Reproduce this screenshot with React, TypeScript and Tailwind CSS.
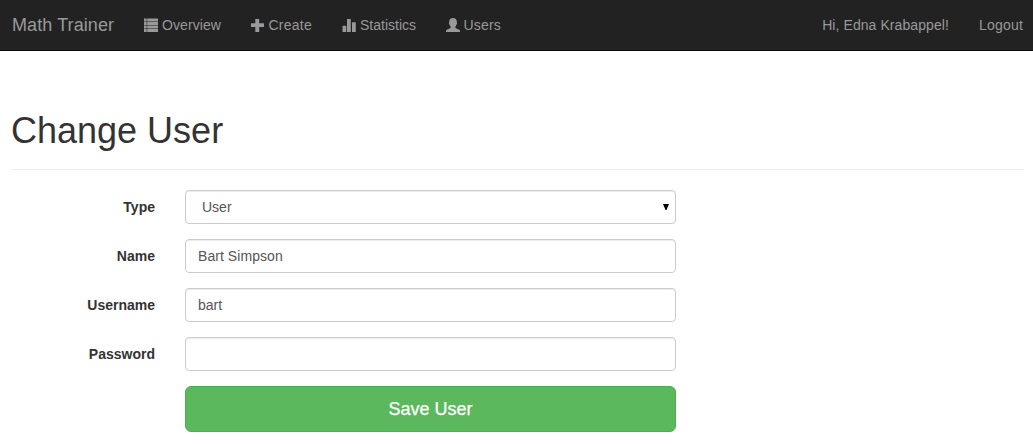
import type { ReactNode } from 'react';

function Glyph({ children }: { children: ReactNode }) {
  return (
    <svg width="15" height="15" viewBox="0 0 15 15" fill="currentColor" className="block shrink-0" aria-hidden="true">
      {children}
    </svg>
  );
}

const links: { label: string; width: string; text: string; icon: ReactNode }[] = [
  {
    label: 'Overview',
    width: 'w-[107px]',
    text: 'ml-[4px] tracking-[0.09px]',
    icon: (
      <path d="M1 .5h2.700v2.900H1zM4.200.5H15v2.900H4.200zM1 4.100h2.700v2.800H1zM4.200 4.100H15v2.800H4.200zM1 7.600h2.700v2.800H1zM4.200 7.600H15v2.800H4.200zM1 11.100h2.700V14H1zM4.200 11.100H15V14H4.200z" />
    ),
  },
  {
    label: 'Create',
    width: 'w-[92px]',
    text: 'ml-[3.5px] tracking-[0.25px]',
    icon: <path d="M5.300 1.300q0-.3.3-.3h3.300q.3 0 .3.300v4h4.500q.3 0 .3.300v3.200q0 .3-.3.300H9.200v4.600q0 .3-.3.300H5.600q-.3 0-.3-.3V9.100H1.300Q1 9.100 1 8.800V5.600q0-.3.3-.3h4z" />,
  },
  {
    label: 'Statistics',
    width: 'w-[103px]',
    text: 'ml-[3px]',
    icon: <path d="M.5 8.300q0-.5.5-.5h2.800q.5 0 .5.500V14H.5zM5 1.500q0-.5.5-.5h2.800q.5 0 .5.500V14H5zM10 4.700q0-.5.5-.5h2.800q.5 0 .5.500V14H10z" />,
  },
  {
    label: 'Users',
    width: 'w-[90px]',
    text: 'ml-[3.5px] tracking-[0.2px]',
    icon: <path d="M1 14v-1.200q0-.7.8-1l3.300-1.500q.6-.3.600-1V8.700q-1-.9-1.200-2.300-.6-.2-.6-1.100 0-.6.3-.8C3.900 1.600 5.300 0 8 0s4.100 1.600 3.800 4.500q.3.200.3.800 0 .9-.6 1.100-.2 1.400-1.200 2.300v.6q0 .7.6 1l3.300 1.500q.8.300.8 1V14z" />,
  },
];

const inputClass =
  'block h-[34px] w-[491px] rounded-[4px] border border-[#ccc] bg-white px-3 text-[14px] leading-5 text-[#555] shadow-[inset_0_1px_1px_rgba(0,0,0,0.075)] outline-none';

function Field({ label, id, children }: { label: string; id: string; children: ReactNode }) {
  return (
    <div className="mb-[15px] flex h-[34px]">
      <label htmlFor={id} className="w-[155px] pt-[7px] text-right font-bold">
        {label}
      </label>
      <div className="relative ml-[30px]">{children}</div>
    </div>
  );
}

export default function App() {
  return (
    <div className="h-[444px] overflow-hidden bg-white font-['Liberation_Sans',Arial,sans-serif] text-[14px] leading-5 text-[#333]">
      <nav className="flex h-[51px] border-b border-[#080808] bg-[#222] text-[#999]">
        <a href="#" className="w-[143px] pt-[15px] pl-[12px] text-[18px] tracking-[0.09px] whitespace-nowrap">
          Math Trainer
        </a>
        {links.map((link) => (
          <a key={link.label} href="#" className={`flex h-[50px] items-center whitespace-nowrap ${link.width}`}>
            <Glyph>{link.icon}</Glyph>
            <span className={link.text}>{link.label}</span>
          </a>
        ))}
        <div className="mr-[10px] ml-auto flex gap-[30px] pt-[15px]">
          <span className="tracking-[0.08px]">Hi, Edna Krabappel!</span>
          <a href="#" className="tracking-[0.2px]">
            Logout
          </a>
        </div>
      </nav>
      <main>
        <div className="mr-[9px] ml-[11px] h-[119px] border-b border-[#eee] pt-[60px]">
          <h1 className="text-[36px] leading-[40px] font-medium">Change User</h1>
        </div>
        <form className="mt-5" onSubmit={(e) => e.preventDefault()}>
          <Field label="Type" id="type">
            <select id="type" className={`${inputClass} appearance-none pl-4`}>
              <option>User</option>
            </select>
            <svg width="6" height="6" viewBox="0 0 6 6" className="pointer-events-none absolute top-[14px] right-[7px]" aria-hidden="true">
              <path d="M0 0h6L3.500 6h-1z" fill="#000" />
            </svg>
          </Field>
          <Field label="Name" id="name">
            <input id="name" defaultValue="Bart Simpson" className={`${inputClass} tracking-[0.06px]`} />
          </Field>
          <Field label="Username" id="username">
            <input id="username" defaultValue="bart" className={inputClass} />
          </Field>
          <Field label="Password" id="password">
            <input id="password" type="password" className={inputClass} />
          </Field>
          <button type="submit" className="ml-[185px] block h-[46px] w-[491px] rounded-[6px] border border-[#4cae4c] bg-[#5cb85c] text-[18px] leading-6 text-white [-webkit-text-stroke:0.25px_white]">
            Save User
          </button>
        </form>
      </main>
    </div>
  );
}
